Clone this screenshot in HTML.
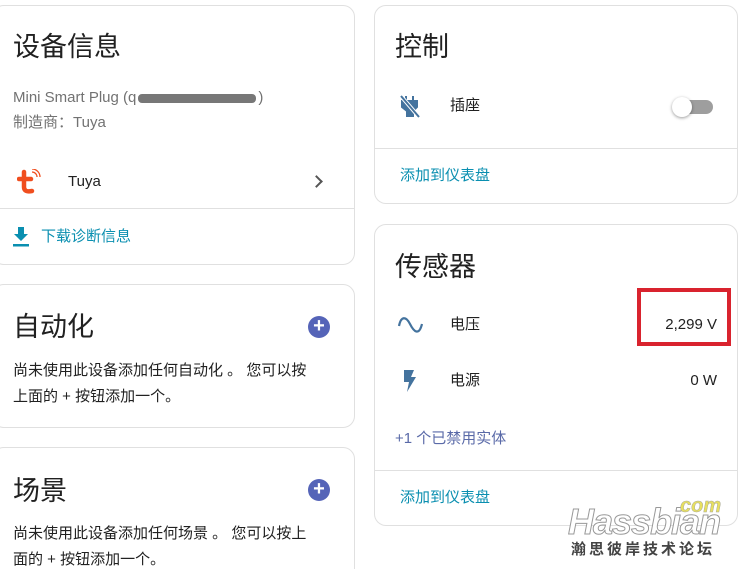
<!DOCTYPE html>
<html><head><meta charset="utf-8"><style>
*{margin:0;padding:0;box-sizing:border-box}
html,body{width:744px;height:569px;overflow:hidden}
body{background:#fff;font-family:"Liberation Sans","Noto Sans CJK SC",sans-serif;color:#212121;position:relative}
.card{position:absolute;border:1px solid #e0e0e0;border-radius:12px;background:#fff}
.a{position:absolute;white-space:nowrap;line-height:1.2}
.h{font-size:27px;color:#212121}
.t{font-size:15px}
.link{color:#0a8fb0;font-size:15px}
.sep{position:absolute;left:0;right:0;height:1px;background:#e0e0e0}
.plus{position:absolute;width:22px;height:22px;border-radius:50%;background:#5564b8;color:#fff;font-size:20px;line-height:21px;text-align:center;font-weight:bold}
</style></head><body>

<div class="card" style="left:-8px;top:5px;width:363px;height:260px">
  <div class="a h" style="left:20px;top:25px">设备信息</div>
  <div class="a t" style="left:20px;top:83px;color:#727272">Mini Smart Plug (q<span style="display:inline-block;width:118px;height:9px;background:#777;border-radius:4px;vertical-align:middle;margin:0 2px"></span>)</div>
  <div class="a t" style="left:20px;top:108px;color:#727272">制造商：Tuya</div>
  <svg class="a" style="left:24px;top:163px" width="24" height="26" viewBox="0 0 24 26"><path d="M7 3v15c0 4 3 5 8 4" fill="none" stroke="#f04e1f" stroke-width="4.5" stroke-linecap="round"/><path d="M2 10h12" stroke="#f04e1f" stroke-width="4.5" stroke-linecap="round"/><path d="M15 3a5 5 0 0 1 5 5M15 0a8 8 0 0 1 8 8" fill="none" stroke="#f04e1f" stroke-width="1.3"/></svg>
  <div class="a t" style="left:75px;top:167px">Tuya</div>
  <div class="a" style="left:319px;top:171px;width:9px;height:9px;border-top:2px solid #555;border-right:2px solid #555;transform:rotate(45deg)"></div>
  <div class="sep" style="top:202px"></div>
  <svg class="a" style="left:19px;top:220px" width="18" height="22" viewBox="0 0 18 22"><path d="M6 1h6v7h4l-7 7-7-7h4z" fill="#0a8fb0"/><rect x="1" y="18" width="16" height="2.5" fill="#0a8fb0"/></svg>
  <div class="a link" style="left:48px;top:222px">下载诊断信息</div>
</div>

<div class="card" style="left:-8px;top:284px;width:363px;height:144px">
  <div class="a h" style="left:20px;top:26px">自动化</div>
  <div class="plus" style="left:315px;top:31px">+</div>
  <div class="a t" style="left:20px;top:73px;line-height:26px;white-space:normal;width:300px">尚未使用此设备添加任何自动化 。 您可以按上面的 + 按钮添加一个。</div>
</div>

<div class="card" style="left:-8px;top:447px;width:363px;height:140px">
  <div class="a h" style="left:20px;top:27px">场景</div>
  <div class="plus" style="left:315px;top:31px">+</div>
  <div class="a t" style="left:20px;top:73px;line-height:26px;white-space:normal;width:300px">尚未使用此设备添加任何场景 。 您可以按上面的 + 按钮添加一个。</div>
</div>

<div class="card" style="left:374px;top:5px;width:364px;height:199px">
  <div class="a h" style="left:20px;top:25px">控制</div>
  <svg class="a" style="left:24px;top:88px" width="22" height="24" viewBox="0 0 22 24"><path d="M7 2v5M14 2v5M3 7h15v6l-4 4v5H8v-5l-5-4z" fill="#44739e" stroke="#44739e" stroke-width="2"/><path d="M2 2l18 21" stroke="#fff" stroke-width="4"/><path d="M2 2l18 21" stroke="#44739e" stroke-width="2"/></svg>
  <div class="a t" style="left:75px;top:91px">插座</div>
  <div class="a" style="left:304px;top:94px;width:34px;height:14px;border-radius:7px;background:#9e9e9e"></div>
  <div class="a" style="left:297px;top:91px;width:20px;height:20px;border-radius:50%;background:#fff;box-shadow:0 1px 3px rgba(0,0,0,.4)"></div>
  <div class="sep" style="top:142px"></div>
  <div class="a link" style="left:25px;top:161px">添加到仪表盘</div>
</div>

<div class="card" style="left:374px;top:224px;width:364px;height:302px">
  <div class="a h" style="left:20px;top:26px">传感器</div>
  <svg class="a" style="left:22px;top:89px" width="28" height="22" viewBox="0 0 28 22"><path d="M2 12C4 2 9 2 13 10S22 22 25 10" fill="none" stroke="#44739e" stroke-width="2.2"/></svg>
  <div class="a t" style="left:75px;top:91px">电压</div>
  <div class="a t" style="right:20px;top:91px">2,299 V</div>
  <div class="a t" style="right:20px;top:147px">0 W</div>
  <svg class="a" style="left:28px;top:144px" width="14" height="24" viewBox="0 0 14 24"><path d="M1 1h10l-3 7h5L4 23l2-10H1z" fill="#44739e"/></svg>
  <div class="a t" style="left:75px;top:147px">电源</div>
  <div class="a t" style="left:20px;top:205px;color:#5a6aa8">+1 个已禁用实体</div>
  <div class="sep" style="top:245px"></div>
  <div class="a link" style="left:25px;top:264px">添加到仪表盘</div>
</div>

<div class="a" style="left:637px;top:288px;width:94px;height:58px;border:4px solid #d9232e"></div>

<div class="a" style="left:568px;top:500px;font-size:36px;font-style:italic;font-weight:bold;color:#fff;-webkit-text-stroke:1px #999;font-family:'Liberation Sans',sans-serif;letter-spacing:-1px">Hassbian</div>
<div class="a" style="left:680px;top:494px;font-size:20px;font-style:italic;font-weight:bold;color:#e8e060;-webkit-text-stroke:.5px #aa9;">com</div>
<div class="a" style="left:571px;top:541px;font-size:15px;color:#444;letter-spacing:3px;font-weight:bold">瀚思彼岸技术论坛</div>
</body></html>
